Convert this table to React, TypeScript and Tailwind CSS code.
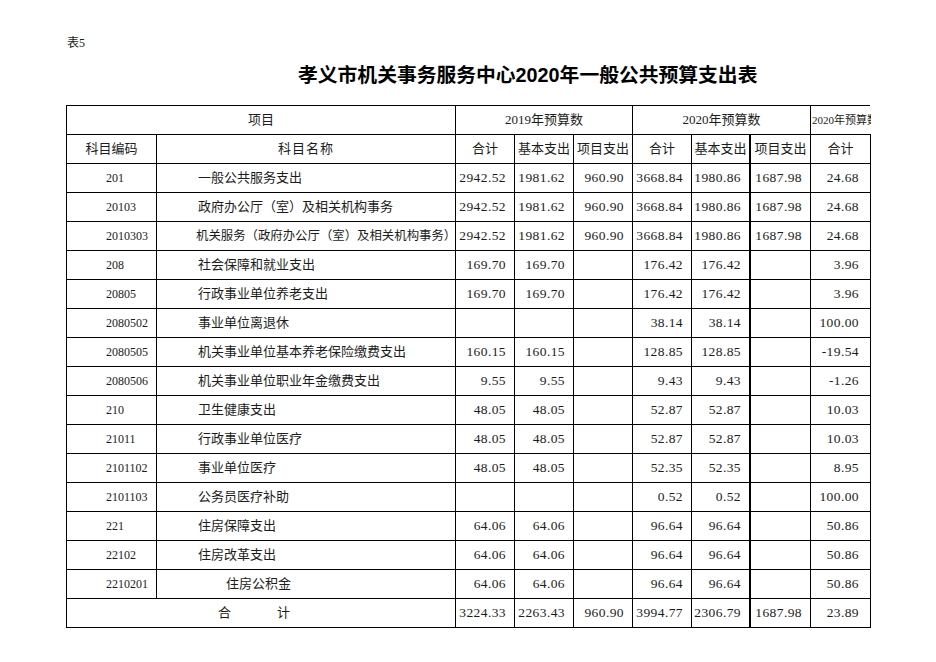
const serif = "font-['Liberation_Serif','Noto_Sans_CJK_SC',serif]";

type Row = [string, string, string, string, string, string, string, string, string];

const same = ["2942.52", "1981.62", "960.90", "3668.84", "1980.86", "1687.98", "24.68"];

const rows: Row[] = [
  ["201", "一般公共服务支出", ...same] as Row,
  ["20103", "政府办公厅（室）及相关机构事务", ...same] as Row,
  ["2010303", "机关服务（政府办公厅（室）及相关机构事务）", ...same] as Row,
  ["208", "社会保障和就业支出", "169.70", "169.70", "", "176.42", "176.42", "", "3.96"],
  ["20805", "行政事业单位养老支出", "169.70", "169.70", "", "176.42", "176.42", "", "3.96"],
  ["2080502", "事业单位离退休", "", "", "", "38.14", "38.14", "", "100.00"],
  ["2080505", "机关事业单位基本养老保险缴费支出", "160.15", "160.15", "", "128.85", "128.85", "", "-19.54"],
  ["2080506", "机关事业单位职业年金缴费支出", "9.55", "9.55", "", "9.43", "9.43", "", "-1.26"],
  ["210", "卫生健康支出", "48.05", "48.05", "", "52.87", "52.87", "", "10.03"],
  ["21011", "行政事业单位医疗", "48.05", "48.05", "", "52.87", "52.87", "", "10.03"],
  ["2101102", "事业单位医疗", "48.05", "48.05", "", "52.35", "52.35", "", "8.95"],
  ["2101103", "公务员医疗补助", "", "", "", "0.52", "0.52", "", "100.00"],
  ["221", "住房保障支出", "64.06", "64.06", "", "96.64", "96.64", "", "50.86"],
  ["22102", "住房改革支出", "64.06", "64.06", "", "96.64", "96.64", "", "50.86"],
  ["2210201", "住房公积金", "64.06", "64.06", "", "96.64", "96.64", "", "50.86"],
];

const totals = ["3224.33", "2263.43", "960.90", "3994.77", "2306.79", "1687.98", "23.89"];

const cell = "h-[29px] flex items-center border-r border-b border-black";

function NumCells({ values }: { values: string[] }) {
  return (
    <>
      {values.map((v, i) => (
        <div
          key={i}
          className={`${cell} justify-end text-[13.5px] tracking-[0.4px] ${i === 4 ? "border-r-2" : ""} ${i === 6 ? "pr-[11px]" : "pr-[8px]"}`}
        >
          {v}
        </div>
      ))}
    </>
  );
}

export default function App() {
  return (
    <div className={`w-[936px] h-[662px] bg-white overflow-hidden text-[#1c1c1c] ${serif}`}>
      <div className="pl-[67px] pt-[36px] text-[12px] leading-[14px]">表5</div>
      <div className="pl-[298px] mt-[13px] text-[19.8px] leading-[24px] font-bold font-['Liberation_Sans','Noto_Sans_CJK_SC',sans-serif] text-black">
        孝义市机关事务服务中心2020年一般公共预算支出表
      </div>

      <div className="ml-[66px] mt-[18px] w-[804px] border-t border-l border-black grid grid-cols-[90px_299px_59px_59px_59px_59px_59px_60px_60px]">
        {/* header row 1 */}
        <div className={`${cell} col-span-2 justify-center text-[13px]`}>项目</div>
        <div className={`${cell} col-span-3 justify-center text-[13px]`}>2019年预算数</div>
        <div className={`${cell} col-span-3 justify-center text-[13px]`}>2020年预算数</div>
        <div className="h-[29px] flex items-center border-b border-black overflow-hidden whitespace-nowrap pl-[1px] text-[11px]">
          2020年预算数比2019年增减%
        </div>

        {/* header row 2 */}
        <div className={`${cell} justify-center text-[13px]`}>科目编码</div>
        <div className={`${cell} justify-center text-[13px] tracking-[1px]`}>科目名称</div>
        {["合计", "基本支出", "项目支出", "合计", "基本支出", "项目支出", "合计"].map((h, i) => (
          <div key={i} className={`${cell} justify-center text-[13px] whitespace-nowrap ${i === 4 ? "border-r-2" : ""}`}>
            {h}
          </div>
        ))}

        {rows.map((r) => (
          <div key={r[0]} className="contents">
            <div className={`${cell} pl-[39px] text-[12px]`}>{r[0]}</div>
            <div
              className={`${cell} whitespace-nowrap ${
                r[0] === "2010303"
                  ? "pl-[39px] text-[12.4px]"
                  : r[0] === "2210201"
                    ? "pl-[69px] text-[13px]"
                    : "pl-[41px] text-[13px]"
              }`}
            >
              {r[1]}
            </div>
            <NumCells values={r.slice(2)} />
          </div>
        ))}

        <div className={`${cell} col-span-2 justify-center text-[13px] gap-[46px] pr-[14px]`}>
          <span>合</span>
          <span>计</span>
        </div>
        <NumCells values={totals} />
      </div>
    </div>
  );
}
